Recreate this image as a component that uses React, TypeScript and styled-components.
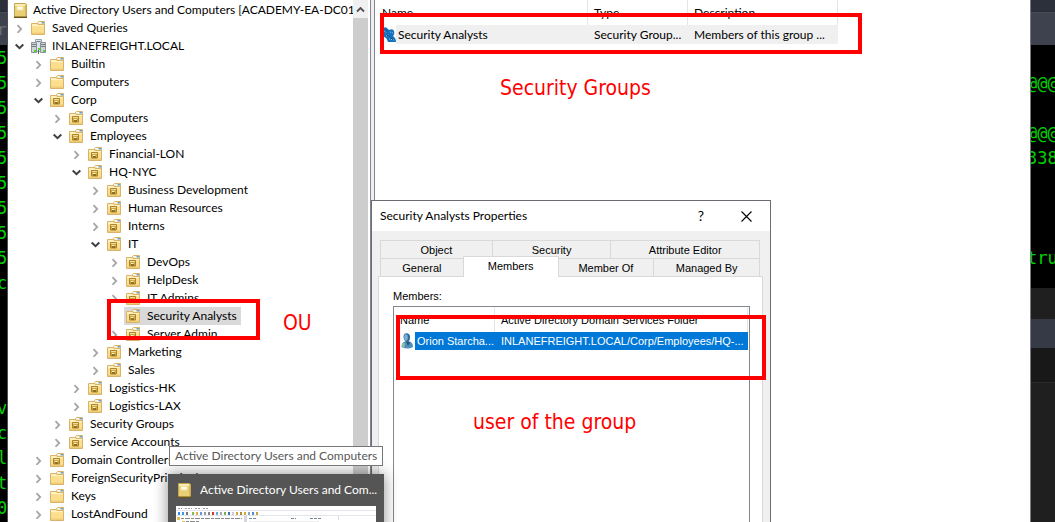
import React from "react";
import styled, { createGlobalStyle, css } from "styled-components";

const GlobalStyle = createGlobalStyle`
  *, *::before, *::after { box-sizing: border-box; }
  body { margin: 0; background: #000; overflow: hidden; }
  button { font: inherit; color: inherit; background: none; border: 0; margin: 0; padding: 0; }
`;

const uiFont = `Lato, "Open Sans", sans-serif`;
const dialogFont = `"Liberation Sans", Arial, sans-serif`;

const Desktop = styled.div`
  display: grid;
  grid-template-columns: 7px minmax(0, 1fr) 24px;
  height: 100vh;
  overflow: hidden;
  font-family: ${uiFont};
  font-size: 12px;
  line-height: 18px;
  color: #000;
`;

/* ---------- terminal visible on both sides ---------- */

const Terminal = styled.div`
  display: flex;
  flex-direction: column;
  overflow: hidden;
  background: #1f1f1f;
  font-family: "DejaVu Sans Mono", monospace;
`;
const TerminalMenu = styled.div`
  height: 12px;
  flex: none;
  background: #2c303b;
  border-bottom: 1px solid #262933;
`;
const TerminalTabs = styled.div<{ $shift: number }>`
  height: 33px;
  flex: none;
  padding-top: 8px;
  background: #3e424e;
  border-top: 1px solid #4a4e5a;
  color: #6c6f78;
  font-size: 16px;
  text-indent: ${(p) => p.$shift}px;
`;
const TerminalText = styled.pre<{ $shift: number; $fill?: boolean }>`
  margin: 0;
  padding: 1px 0 0 0;
  flex: ${(p) => (p.$fill ? "1" : "none")};
  height: ${(p) => (p.$fill ? "auto" : "243px")};
  overflow: hidden;
  background: #000;
  color: #00d200;
  font: 17px/25px "DejaVu Sans Mono", monospace;
  & > span { display: block; height: 25px; margin-left: ${(p) => p.$shift}px; }
`;
const Band = styled.div<{ $h: number; $bg: string }>`
  flex: none;
  height: ${(p) => p.$h}px;
  background: ${(p) => p.$bg};
`;
const BandRest = styled.div`
  flex: 1;
  border-top: 1px solid #2b2b2b;
`;

/* ---------- console window ---------- */

const ConsoleWindow = styled.div`
  position: relative;
  display: flex;
  min-width: 0;
  height: 100vh;
  background: #fff;
  border-left: 1px solid #4b4d57;
  border-right: 1px solid #777985;
`;
const TreePane = styled.nav`
  flex: none;
  width: 345px;
  overflow: hidden;
`;
const TreeList = styled.ul`
  list-style: none;
  margin: 0;
  padding: 1px 0 0;
`;
const TreeRow = styled.li<{ $level: number }>`
  display: flex;
  align-items: center;
  height: 18px;
  padding-left: ${(p) => (p.$level === 0 ? 4 : p.$level * 19 - 15)}px;
  white-space: nowrap;
`;
const Toggle = styled.button`
  display: flex;
  align-items: center;
  justify-content: center;
  flex: none;
  width: 16px;
  height: 18px;
  margin-right: 1px;
`;
const TreeItem = styled.button<{ $selected?: boolean }>`
  display: flex;
  align-items: center;
  gap: 6px;
  height: 18px;
  padding: 0 4px 0 2px;
  background: ${(p) => (p.$selected ? "#d9d9d9" : "transparent")};
  & > svg { flex: none; }
`;
const Scrollbar = styled.div`
  flex: none;
  display: flex;
  flex-direction: column;
  width: 15px;
  background: #f0f0f0;
`;
const ScrollUp = styled.button`
  display: flex;
  align-items: center;
  justify-content: center;
  height: 18px;
`;
const ScrollThumb = styled.div`
  flex: 1;
  background: #cdcdcd;
`;
const Splitter = styled.div`
  flex: none;
  width: 5px;
  margin-left: 2px;
  background: #f0f0f0;
  border-left: 1px solid #828790;
  border-right: 1px solid #828790;
`;
const ListPane = styled.main`
  flex: 1;
  min-width: 0;
  overflow: hidden;
`;
const GroupTable = styled.table`
  table-layout: fixed;
  width: 463px;
  border-collapse: separate;
  border-spacing: 0;
  text-align: left;
  white-space: nowrap;
  th { height: 25px; padding: 0 6px; font-weight: 400; border-right: 1px solid #e5e5e5; }
  th:first-child { padding-left: 7px; }
  td { height: 19px; padding: 0 6px; background: #f0f0f0; }
  td:first-child { padding-left: 8px; background: linear-gradient(90deg, #fff 21px, #f0f0f0 21px); }
`;
const NameCell = styled.div<{ $gap: number }>`
  display: flex;
  align-items: center;
  gap: ${(p) => p.$gap}px;
  & > svg { flex: none; }
`;

/* ---------- properties dialog ---------- */

const Dialog = styled.section`
  position: absolute;
  z-index: 1;
  left: 363px;
  top: 200px;
  bottom: -2px;
  width: 400px;
  display: flex;
  flex-direction: column;
  background: #f0f0f0;
  border: 1px solid #6b6b73;
`;
const TitleBar = styled.header`
  display: flex;
  align-items: center;
  flex: none;
  height: 30px;
  padding: 0 17px 0 8px;
  background: #fff;
`;
const DialogTitle = styled.h1`
  flex: 1;
  margin: 0;
  font-size: 12px;
  font-weight: 400;
`;
const TitleButton = styled.button`
  display: flex;
  align-items: center;
  justify-content: center;
  width: 14px;
  height: 18px;
  margin-left: 31px;
  font-size: 14px;
`;
const DialogBody = styled.div`
  flex: 1;
  display: flex;
  flex-direction: column;
  padding: 9px 7px 0 6px;
  font-family: ${dialogFont};
  font-size: 11px;
`;
const TabRow = styled.div<{ $columns: string }>`
  display: grid;
  grid-template-columns: ${(p) => p.$columns};
  flex: none;
  height: 18px;
  margin: 0 3px 0 2px;
  border-left: 1px solid #d9d9d9;
`;
const Tab = styled.button<{ $active?: boolean }>`
  height: 18px;
  border: 1px solid #d9d9d9;
  border-width: 1px 1px 0 0;
  ${(p) =>
    p.$active &&
    css`
      position: relative;
      height: 21px;
      margin: -2px 0 0 -1px;
      padding-bottom: 2px;
      border-left-width: 1px;
      background: #fff;
    `}
`;
const TabPanel = styled.div`
  flex: 1;
  display: flex;
  flex-direction: column;
  padding: 10px 12px 0 14px;
  background: #fff;
  border: 1px solid #d9d9d9;
  border-bottom: 0;
`;
const MembersLabel = styled.span`
  flex: none;
  height: 19px;
`;
const MembersBox = styled.div`
  flex: 1;
  border: 1px solid #828790;
  border-bottom: 0;
`;
const MembersTable = styled.table`
  table-layout: fixed;
  width: 354px;
  border-collapse: separate;
  border-spacing: 0;
  text-align: left;
  white-space: nowrap;
  th { height: 25px; padding: 0 6px; font-weight: 400; border-right: 1px solid #e5e5e5; }
  td { height: 17px; padding: 0 6px; color: #fff; background: #0078d7; }
  td:first-child { padding: 0 0 0 7px; background: linear-gradient(90deg, #fff 21px, #0078d7 21px); }
`;

/* ---------- task bar preview ---------- */

const Tooltip = styled.div`
  position: absolute;
  z-index: 3;
  left: 161px;
  top: 446px;
  height: 20px;
  padding: 0 5px;
  background: #fff;
  border: 1px solid #767676;
  color: #575757;
  white-space: nowrap;
`;
const Preview = styled.aside`
  position: absolute;
  z-index: 2;
  left: 160px;
  top: 474px;
  bottom: -40px;
  width: 216px;
  padding: 0 8px;
  background: #555;
  box-shadow: 0 0 14px rgba(0, 0, 0, 0.45);
  color: #fff;
`;
const PreviewTitle = styled.div`
  display: flex;
  align-items: center;
  gap: 9px;
  height: 32px;
  padding-left: 2px;
  white-space: nowrap;
  & > svg { flex: none; }
`;

/* ---------- annotations ---------- */

const Frame = styled.div<{ $x: number; $y: number; $w: number; $h: number }>`
  position: absolute;
  z-index: 4;
  left: ${(p) => p.$x}px;
  top: ${(p) => p.$y}px;
  width: ${(p) => p.$w}px;
  height: ${(p) => p.$h}px;
  border: 4px solid #f00;
  pointer-events: none;
`;
const Note = styled.p<{ $x: number; $y: number }>`
  position: absolute;
  z-index: 4;
  left: ${(p) => p.$x}px;
  top: ${(p) => p.$y}px;
  margin: 0;
  color: #f00;
  font: 21px/26px "DejaVu Sans Condensed", "DejaVu Sans", sans-serif;
  white-space: nowrap;
`;

/* ---------- icons ---------- */

const FolderIcon = ({ unit }: { unit?: boolean }) => (
  <svg width="15" height="14" viewBox="0 0 15 14" aria-hidden="true">
    <path d="M6.500 3V1.500L7.500.5h6V4z" fill="#fff6d8" stroke="#d9b36a" />
    <path d="M10.500 1H13v1.500h-2.500z" fill="#5aa5e0" />
    <path d="M.5 13.500v-11h5.500l1 1h6.500v10z" fill="#fbdf8f" stroke="#d9b36a" />
    <path d="M1 3h4.700l1 1H13v1.200H1z" fill="#fff0bd" />
    <path d="M1 11.500h12V13H1z" fill="#f0cd74" />
    {unit && (
      <g>
        <path d="M3.500 5.500h6v5.500h-6z" fill="#cfa640" stroke="#a88532" />
        <path d="M4 6h5v1H4z" fill="#f3dc8c" />
        <path d="M5 8h2.500v2H5z" fill="#fff3c4" />
        <path d="M5 9h3v2H5z" fill="#8f7024" />
      </g>
    )}
  </svg>
);

const ConsoleIcon = () => (
  <svg width="13" height="15" viewBox="0 0 13 15" aria-hidden="true">
    <path d="M.5.5h11l1 1v13H.5z" fill="#e9cf74" stroke="#c4a650" />
    <path d="M1 1h10v2H1z" fill="#f8ebb4" />
    <path d="M3 3.500h6v3.500H3z" fill="#fffbe8" stroke="#f3e3a4" />
    <path d="M0 13.500h13V15H0z" fill="#6b5414" />
    <path d="M11.500 2h1v11h-1z" fill="#c9a94e" />
  </svg>
);

const DomainIcon = () => (
  <svg width="15" height="15" viewBox="0 0 15 15" aria-hidden="true">
    <path d="M4.500.5h6v12h-6z" fill="#dfe5e9" stroke="#9aa3a9" />
    <path d="M.5 3.500h5v10h-5z" fill="#cdd5d9" stroke="#88929a" />
    <path d="M9.500 3.500h5v10h-5z" fill="#cdd5d9" stroke="#88929a" />
    <path d="M1 5.500h4M1 7.500h4M10 5.500h4M10 7.500h4M5.500 2.500h4" stroke="#6f7c84" />
    <path d="M3 11h2v2H3zM12 11h2v2h-2zM7 9h2v2H7z" fill="#57d51c" />
    <path d="M7.500 11v4" stroke="#5a6870" />
  </svg>
);

const GroupIcon = () => (
  <svg width="13" height="16" viewBox="0 0 13 16" aria-hidden="true">
    <path d="M0 1q3-2 5 1l1 1q4-2 5 1 1 3-1 5 3 2 3 6H5q-1-3-2-4-3-1-3-3z" fill="#1672bd" />
    <path d="M1 4l4 3M3 9l4-1M6 12l5 1M7 5l3 1" stroke="#8cc3ec" strokeDasharray="1 1" />
    <path d="M2 2l3 3M5 8l5 5M4 6l1 4" stroke="#0b3f72" strokeDasharray="1 1" />
  </svg>
);

const UserIcon = () => (
  <svg width="13" height="16" viewBox="0 0 13 16" aria-hidden="true">
    <path d="M.5 14q0-5 4-5.500h3.500q4 .5 4 5.500-3 1.500-5.500 1.500T.5 14z" fill="#4f8fbe" />
    <path d="M1 12q0 2 2 3l1-5q-3 0-3 2z" fill="#8fc6a0" />
    <path d="M5 9l2 4 2.500-4z" fill="#24587f" />
    <path d="M2.500 4q0-3.500 3-3.700Q9 .3 9 4t-1.500 5H5Q2.500 7 2.500 4z" fill="#2f6a97" />
    <ellipse cx="5" cy="4.500" rx="1.800" ry="3.200" fill="#78b0d6" />
  </svg>
);

const Chevron = ({ open }: { open: boolean }) =>
  open ? (
    <svg width="10" height="10" viewBox="0 0 10 10" aria-hidden="true">
      <path d="M.7 3.500L4.500 7.200l3.800-3.700" fill="none" stroke="#404040" strokeWidth="2" />
    </svg>
  ) : (
    <svg width="10" height="10" viewBox="0 0 10 10" aria-hidden="true">
      <path d="M2.500 2.200L6.200 6 2.500 9.800" fill="none" stroke="#a6a6a6" strokeWidth="1.800" />
    </svg>
  );

/* Miniature of the console window: menu, toolbar, tree and list */
const Thumbnail = () => (
  <svg width="200" height="60" viewBox="0 0 200 60" aria-hidden="true">
    <path d="M0 0h200v60H0z" fill="#fff" />
    <path d="M2 2.500h4M9 2.500h7M19 2.500h5M27 2.500h5" stroke="#999" strokeDasharray="2 1" />
    <path d="M0 4.500h200M0 9.500h200" stroke="#e4e6ee" />
    {["#2f8de4", "#3b9ae8", "#777", "#8ab94a", "#e0b040", "#5b9bd0", "#999", "#888", "#d33", "#6aa8d8", "#aaa", "#7cb04a", "#3d6fc0", "#ccc", "#d2a640", "#b08a30", "#d2a640", "#8aa", "#58c", "#c8a040"].map(
      (c, i) => (
        <rect key={i} x={2 + (i > 2 ? 2 : 0) + i * 4} y="6" width="2" height="3" fill={c} />
      )
    )}
    <path d="M1 11h3v3H1zM6 15h3v2H6z" fill="#e3bd54" />
    <path d="M5 12.500h61M10 15.500h13" stroke="#888" strokeDasharray="3 1 5 1" />
    <path d="M68 10h3v50h-3z" fill="#d5d7de" />
    <path d="M73 12.500h7M115 12.500h5M134 12.500h12" stroke="#789" strokeDasharray="3 1" />
    <path d="M162.500 10v4" stroke="#ddd" />
    <path d="M73 15.500h70" stroke="#ececec" />
  </svg>
);

/* ---------- data ---------- */

type Kind = "folder" | "unit" | "console" | "domain";
type Node = { level: number; label: string; kind: Kind; open?: boolean; selected?: boolean };

const nodes: Node[] = [
  { level: 0, label: "Active Directory Users and Computers [ACADEMY-EA-DC01.", kind: "console" },
  { level: 1, label: "Saved Queries", kind: "folder" },
  { level: 1, label: "INLANEFREIGHT.LOCAL", kind: "domain", open: true },
  { level: 2, label: "Builtin", kind: "folder" },
  { level: 2, label: "Computers", kind: "folder" },
  { level: 2, label: "Corp", kind: "unit", open: true },
  { level: 3, label: "Computers", kind: "unit" },
  { level: 3, label: "Employees", kind: "unit", open: true },
  { level: 4, label: "Financial-LON", kind: "unit" },
  { level: 4, label: "HQ-NYC", kind: "unit", open: true },
  { level: 5, label: "Business Development", kind: "unit" },
  { level: 5, label: "Human Resources", kind: "unit" },
  { level: 5, label: "Interns", kind: "unit" },
  { level: 5, label: "IT", kind: "unit", open: true },
  { level: 6, label: "DevOps", kind: "unit" },
  { level: 6, label: "HelpDesk", kind: "unit" },
  { level: 6, label: "IT Admins", kind: "unit" },
  { level: 6, label: "Security Analysts", kind: "unit", selected: true },
  { level: 6, label: "Server Admin", kind: "unit" },
  { level: 5, label: "Marketing", kind: "unit" },
  { level: 5, label: "Sales", kind: "unit" },
  { level: 4, label: "Logistics-HK", kind: "unit" },
  { level: 4, label: "Logistics-LAX", kind: "unit" },
  { level: 3, label: "Security Groups", kind: "unit" },
  { level: 3, label: "Service Accounts", kind: "unit" },
  { level: 2, label: "Domain Controllers", kind: "unit" },
  { level: 2, label: "ForeignSecurityPrincipals", kind: "folder" },
  { level: 2, label: "Keys", kind: "folder" },
  { level: 2, label: "LostAndFound", kind: "folder" },
];

const leftOutput = ["5", "5", "5", "5", "5", "5", "5", "5", "5", "c", "", "", "", "", "v", "c", "l", "t", "0"];
const rightOutput = ["", "@@@", "", "@@@", "338", "", "", "", "tru"];

const NodeIcon = ({ kind }: { kind: Kind }) => {
  if (kind === "console") return <ConsoleIcon />;
  if (kind === "domain") return <DomainIcon />;
  return <FolderIcon unit={kind === "unit"} />;
};

export default function App() {
  return (
    <>
      <GlobalStyle />
      <Desktop>
        <Terminal>
          <TerminalMenu />
          <TerminalTabs $shift={-3}>r</TerminalTabs>
          <TerminalText $shift={-3} $fill>
            {leftOutput.map((t, i) => (
              <span key={i}>{t}</span>
            ))}
          </TerminalText>
        </Terminal>

        <ConsoleWindow>
          <TreePane aria-label="Console tree">
            <TreeList>
              {nodes.map((n, i) => (
                <TreeRow key={i} $level={n.level}>
                  {n.level > 0 && (
                    <Toggle aria-label={`Toggle ${n.label}`} aria-expanded={!!n.open}>
                      {!n.selected && <Chevron open={!!n.open} />}
                    </Toggle>
                  )}
                  <TreeItem $selected={n.selected}>
                    <NodeIcon kind={n.kind} />
                    {n.label}
                  </TreeItem>
                </TreeRow>
              ))}
            </TreeList>
          </TreePane>
          <Scrollbar>
            <ScrollUp aria-label="Scroll up">
              <svg width="9" height="7" viewBox="0 0 9 7" aria-hidden="true">
                <path d="M1 5.500l3.500-3.500L8 5.500" fill="none" stroke="#505050" strokeWidth="1.800" />
              </svg>
            </ScrollUp>
            <ScrollThumb />
          </Scrollbar>
          <Splitter />
          <ListPane>
            <GroupTable>
              <colgroup>
                <col style={{ width: 213 }} />
                <col style={{ width: 100 }} />
                <col style={{ width: 150 }} />
              </colgroup>
              <thead>
                <tr>
                  <th>Name</th>
                  <th>Type</th>
                  <th>Description</th>
                </tr>
              </thead>
              <tbody>
                <tr>
                  <td>
                    <NameCell $gap={2}>
                      <GroupIcon />
                      Security Analysts
                    </NameCell>
                  </td>
                  <td>Security Group...</td>
                  <td>Members of this group ...</td>
                </tr>
              </tbody>
            </GroupTable>
          </ListPane>

          <Dialog role="dialog" aria-labelledby="dialog-title">
            <TitleBar>
              <DialogTitle id="dialog-title">Security Analysts Properties</DialogTitle>
              <TitleButton>?</TitleButton>
              <TitleButton aria-label="Close">
                <svg width="11" height="11" viewBox="0 0 11 11" aria-hidden="true">
                  <path d="M.5.5l10 10M10.500.5l-10 10" stroke="#000" strokeWidth="1.100" />
                </svg>
              </TitleButton>
            </TitleBar>
            <DialogBody>
              <TabRow role="tablist" $columns="112fr 119fr 149fr">
                <Tab role="tab">Object</Tab>
                <Tab role="tab">Security</Tab>
                <Tab role="tab">Attribute Editor</Tab>
              </TabRow>
              <TabRow role="tablist" $columns="83fr 95fr 96fr 106fr">
                <Tab role="tab">General</Tab>
                <Tab role="tab" aria-selected $active>
                  Members
                </Tab>
                <Tab role="tab">Member Of</Tab>
                <Tab role="tab">Managed By</Tab>
              </TabRow>
              <TabPanel role="tabpanel">
                <MembersLabel id="members-label">Members:</MembersLabel>
                <MembersBox>
                  <MembersTable aria-labelledby="members-label">
                    <colgroup>
                      <col style={{ width: 101 }} />
                      <col style={{ width: 253 }} />
                    </colgroup>
                    <thead>
                      <tr>
                        <th>Name</th>
                        <th>Active Directory Domain Services Folder</th>
                      </tr>
                    </thead>
                    <tbody>
                      <tr>
                        <td>
                          <NameCell $gap={3}>
                            <UserIcon />
                            Orion Starcha...
                          </NameCell>
                        </td>
                        <td>INLANEFREIGHT.LOCAL/Corp/Employees/HQ-...</td>
                      </tr>
                    </tbody>
                  </MembersTable>
                </MembersBox>
              </TabPanel>
            </DialogBody>
          </Dialog>

          <Tooltip role="tooltip">Active Directory Users and Computers</Tooltip>
          <Preview>
            <PreviewTitle>
              <ConsoleIcon />
              Active Directory Users and Com...
            </PreviewTitle>
            <Thumbnail />
          </Preview>

          <Frame $x={372} $y={13} $w={482} $h={41} />
          <Note $x={492} $y={75}>Security Groups</Note>
          <Frame $x={99} $y={299} $w={153} $h={41} />
          <Note $x={275} $y={310}>OU</Note>
          <Frame $x={388} $y={315} $w={370} $h={65} />
          <Note $x={465} $y={409}>user of the group</Note>
        </ConsoleWindow>

        <Terminal>
          <TerminalMenu />
          <TerminalTabs $shift={0} />
          <TerminalText $shift={-4}>
            {rightOutput.map((t, i) => (
              <span key={i}>{t}</span>
            ))}
          </TerminalText>
          <Band $h={31} $bg="#1f1f1f" />
          <Band $h={29} $bg="#363a47" />
          <Band $h={34} $bg="#181818" />
          <BandRest />
        </Terminal>
      </Desktop>
    </>
  );
}
